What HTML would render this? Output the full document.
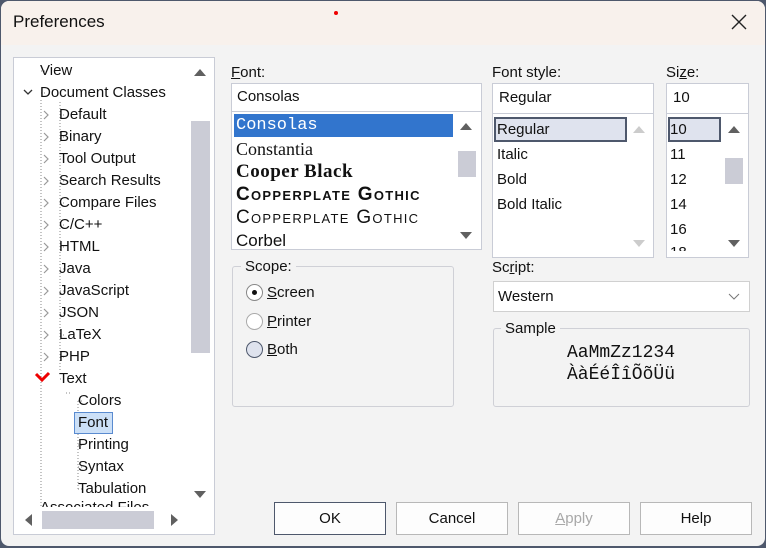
<!DOCTYPE html>
<html><head><meta charset="utf-8"><style>
*{margin:0;padding:0;box-sizing:border-box}
body{width:766px;height:548px;background:#4e586c;font-family:"Liberation Sans",sans-serif;font-size:15px;color:#111;position:relative;overflow:hidden}
.win{position:absolute;left:1px;top:1px;width:764px;height:545px;background:#f3f3f3;border-radius:8px;overflow:hidden}
.title{position:absolute;left:0;top:0;width:764px;height:44px;background:#f8f1ec}
.a{position:absolute;white-space:nowrap}
.t{position:absolute;white-space:nowrap;line-height:20px}
.box{position:absolute;background:#fff;border:1px solid #c9ccd6}
.up{position:absolute;width:0;height:0;border-left:6px solid transparent;border-right:6px solid transparent;border-bottom:7px solid #606060}
.dn{position:absolute;width:0;height:0;border-left:6px solid transparent;border-right:6px solid transparent;border-top:7px solid #606060}
.thumb{position:absolute;background:#cbccd6}
.grp{position:absolute;border:1px solid #cfd0d6;border-radius:3px}
.btn{position:absolute;top:501px;width:112px;height:33px;background:#fdfdfd;border:1px solid #b8b8b8;text-align:center;line-height:31px;font-size:15px}
u{text-decoration:underline}
</style></head><body>
<div class="win">
<div class="title"></div>
<div class="a" style="left:333px;top:10px;width:4px;height:4px;border-radius:2px;background:#e00"></div>
<div class="t" style="left:12px;top:11px;font-size:17px">Preferences</div>
<svg class="a" style="left:730px;top:13px" width="16" height="16"><path d="M1 1L15 15M15 1L1 15" stroke="#222" stroke-width="1.4"/></svg>

<!-- tree -->
<div class="box" style="left:12px;top:56px;width:202px;height:478px;border-color:#c9ccd6"></div>
<div class="a" style="left:13px;top:57px;width:200px;height:476px;overflow:hidden">
 <svg class="a" style="left:0;top:0" width="200" height="476">
  <g stroke="#888" stroke-dasharray="1 2" fill="none">
   <path d="M27 13H33M27 35H33"/>
   <path d="M27 42V450"/>
   <path d="M46 57H52M46 79H52M46 101H52M46 123H52M46 145H52M46 167H52M46 189H52M46 211H52M46 233H52M46 255H52M46 277H52M46 299H52M46 321H52"/>
   <path d="M46 44V312"/>
   <path d="M52 335H58"/>
   <path d="M64 343V431"/>
   <path d="M64 343H70M64 365H70M64 387H70M64 409H70M64 431H70"/>
  </g>
  <path d="M10 32L14 36L18 32" stroke="#333" stroke-width="1.3" fill="none"/>
  <g stroke="#999" stroke-width="1.2" fill="none">
   <path d="M30 53L34 57L30 61M30 75L34 79L30 83M30 97L34 101L30 105M30 119L34 123L30 127M30 141L34 145L30 149M30 163L34 167L30 171M30 185L34 189L30 193M30 207L34 211L30 215M30 229L34 233L30 237M30 251L34 255L30 259M30 273L34 277L30 281M30 295L34 299L30 303"/>
  </g>
  <path d="M22 316L28 322L35 315" stroke="#e00" stroke-width="3" fill="none"/>
 </svg>
 <div class="t" style="left:26px;top:3px">View</div>
 <div class="t" style="left:26px;top:25px">Document Classes</div>
 <div class="t" style="left:45px;top:47px">Default</div>
 <div class="t" style="left:45px;top:69px">Binary</div>
 <div class="t" style="left:45px;top:91px">Tool Output</div>
 <div class="t" style="left:45px;top:113px">Search Results</div>
 <div class="t" style="left:45px;top:135px">Compare Files</div>
 <div class="t" style="left:45px;top:157px">C/C++</div>
 <div class="t" style="left:45px;top:179px">HTML</div>
 <div class="t" style="left:45px;top:201px">Java</div>
 <div class="t" style="left:45px;top:223px">JavaScript</div>
 <div class="t" style="left:45px;top:245px">JSON</div>
 <div class="t" style="left:45px;top:267px">LaTeX</div>
 <div class="t" style="left:45px;top:289px">PHP</div>
 <div class="t" style="left:45px;top:311px">Text</div>
 <div class="t" style="left:64px;top:333px">Colors</div>
 <div class="a" style="left:60px;top:354px;width:39px;height:22px;background:#cce0f7;border:1px solid #5a8bd0"></div>
 <div class="t" style="left:64px;top:355px">Font</div>
 <div class="t" style="left:64px;top:377px">Printing</div>
 <div class="t" style="left:64px;top:399px">Syntax</div>
 <div class="t" style="left:64px;top:421px">Tabulation</div>
 <div class="t" style="left:26px;top:440px">Associated Files</div>
 <div class="a" style="left:0;top:449px;width:200px;height:27px;background:#fff"></div>
 <div class="thumb" style="left:177px;top:63px;width:19px;height:232px"></div>
 <div class="up" style="left:180px;top:11px"></div>
 <div class="dn" style="left:180px;top:433px"></div>
 <div class="thumb" style="left:28px;top:453px;width:112px;height:18px"></div>
 <div class="a" style="left:11px;top:456px;border-top:6px solid transparent;border-bottom:6px solid transparent;border-right:7px solid #606060"></div>
 <div class="a" style="left:157px;top:456px;border-top:6px solid transparent;border-bottom:6px solid transparent;border-left:7px solid #606060"></div>
</div>

<!-- Font -->
<div class="t" style="left:230px;top:62px"><u>F</u>ont:</div>
<div class="box" style="left:230px;top:82px;width:251px;height:29px"></div>
<div class="t" style="left:236px;top:86px">Consolas</div>
<div class="box" style="left:230px;top:110px;width:251px;height:139px;overflow:hidden">
 <div class="a" style="left:2px;top:2px;width:219px;height:23px;background:#3275cd"></div>
 <div class="t" style="left:4px;top:3px;color:#fff;font-family:'Liberation Mono',monospace;font-size:17px;line-height:22px">Consolas</div>
 <div class="t" style="left:4px;top:26px;font-family:'Liberation Serif',serif;font-size:18px;line-height:22px">Constantia</div>
 <div class="t" style="left:4px;top:49px;font-family:'Liberation Serif',serif;font-size:19px;font-weight:bold;line-height:22px;letter-spacing:0.5px">Cooper Black</div>
 <div class="t" style="left:4px;top:72px;font-family:'Liberation Sans',sans-serif;font-size:19px;font-weight:bold;line-height:22px;font-variant:small-caps;letter-spacing:1.3px">Copperplate Gothic</div>
 <div class="t" style="left:4px;top:95px;font-family:'Liberation Sans',sans-serif;font-size:19px;line-height:22px;font-variant:small-caps;letter-spacing:1.3px">Copperplate Gothic</div>
 <div class="t" style="left:4px;top:118px;font-size:17px;line-height:22px">Corbel</div>
 <div class="a" style="left:222px;top:0;width:28px;height:139px;background:#fff"></div>
 <div class="up" style="left:228px;top:11px"></div>
 <div class="thumb" style="left:226px;top:39px;width:18px;height:26px"></div>
 <div class="dn" style="left:228px;top:120px"></div>
</div>

<!-- Font style -->
<div class="t" style="left:491px;top:62px">Font style:</div>
<div class="box" style="left:491px;top:82px;width:162px;height:31px"></div>
<div class="t" style="left:498px;top:87px">Regular</div>
<div class="box" style="left:491px;top:112px;width:162px;height:145px"></div>
<div class="a" style="left:493px;top:116px;width:133px;height:25px;background:#dfe3ee;border:2px solid #4e586c"></div>
<div class="t" style="left:496px;top:119px">Regular</div>
<div class="t" style="left:496px;top:144px">Italic</div>
<div class="t" style="left:496px;top:169px">Bold</div>
<div class="t" style="left:496px;top:194px">Bold Italic</div>
<div class="up" style="left:632px;top:125px;border-bottom-color:#ccc"></div>
<div class="dn" style="left:632px;top:239px;border-top-color:#ccc"></div>

<!-- Size -->
<div class="t" style="left:665px;top:62px">Si<u>z</u>e:</div>
<div class="box" style="left:665px;top:82px;width:83px;height:31px"></div>
<div class="t" style="left:672px;top:87px">10</div>
<div class="box" style="left:665px;top:112px;width:83px;height:145px;overflow:hidden">
 <div class="t" style="left:3px;top:129px">18</div>
 <div class="a" style="left:0;top:137px;width:60px;height:10px;background:#fff"></div>
</div>
<div class="a" style="left:667px;top:116px;width:53px;height:25px;background:#dfe3ee;border:2px solid #4e586c"></div>
<div class="t" style="left:669px;top:119px">10</div>
<div class="t" style="left:669px;top:144px">11</div>
<div class="t" style="left:669px;top:169px">12</div>
<div class="t" style="left:669px;top:194px">14</div>
<div class="t" style="left:669px;top:219px">16</div>
<div class="up" style="left:727px;top:125px"></div>
<div class="thumb" style="left:724px;top:157px;width:18px;height:26px"></div>
<div class="dn" style="left:727px;top:239px"></div>

<!-- Scope -->
<div class="grp" style="left:231px;top:265px;width:222px;height:141px"></div>
<div class="t" style="left:240px;top:256px;background:#f3f3f3;padding:0 4px">Scope:</div>
<div class="a" style="left:245px;top:283px;width:17px;height:17px;border-radius:50%;background:#fff;border:1px solid #888"></div>
<div class="a" style="left:251px;top:289px;width:5px;height:5px;border-radius:50%;background:#111"></div>
<div class="t" style="left:266px;top:282px"><u>S</u>creen</div>
<div class="a" style="left:245px;top:312px;width:17px;height:17px;border-radius:50%;background:#fff;border:1px solid #aaa"></div>
<div class="t" style="left:266px;top:311px"><u>P</u>rinter</div>
<div class="a" style="left:245px;top:340px;width:17px;height:17px;border-radius:50%;background:#dfe3ee;border:1px solid #4e586c"></div>
<div class="t" style="left:266px;top:339px"><u>B</u>oth</div>

<!-- Script -->
<div class="t" style="left:491px;top:257px">Sc<u>r</u>ipt:</div>
<div class="box" style="left:492px;top:280px;width:257px;height:31px;border-color:#d0d0d0"></div>
<div class="t" style="left:497px;top:286px">Western</div>
<svg class="a" style="left:727px;top:292px" width="12" height="8"><path d="M1 1L6 6L11 1" stroke="#777" fill="none"/></svg>

<!-- Sample -->
<div class="grp" style="left:492px;top:327px;width:257px;height:79px"></div>
<div class="t" style="left:500px;top:318px;background:#f3f3f3;padding:0 4px">Sample</div>
<div class="t" style="left:566px;top:341px;font-family:'Liberation Mono','DejaVu Sans Mono',monospace;font-size:18px;line-height:22px">AaMmZz1234<br>ÀàÉéÎîÕõÜü</div>

<!-- Buttons -->
<div class="btn" style="left:273px;border-color:#4e586c">OK</div>
<div class="btn" style="left:395px">Cancel</div>
<div class="btn" style="left:517px;color:#a8a8a8"><u>A</u>pply</div>
<div class="btn" style="left:639px">Help</div>
</div>
</body></html>
